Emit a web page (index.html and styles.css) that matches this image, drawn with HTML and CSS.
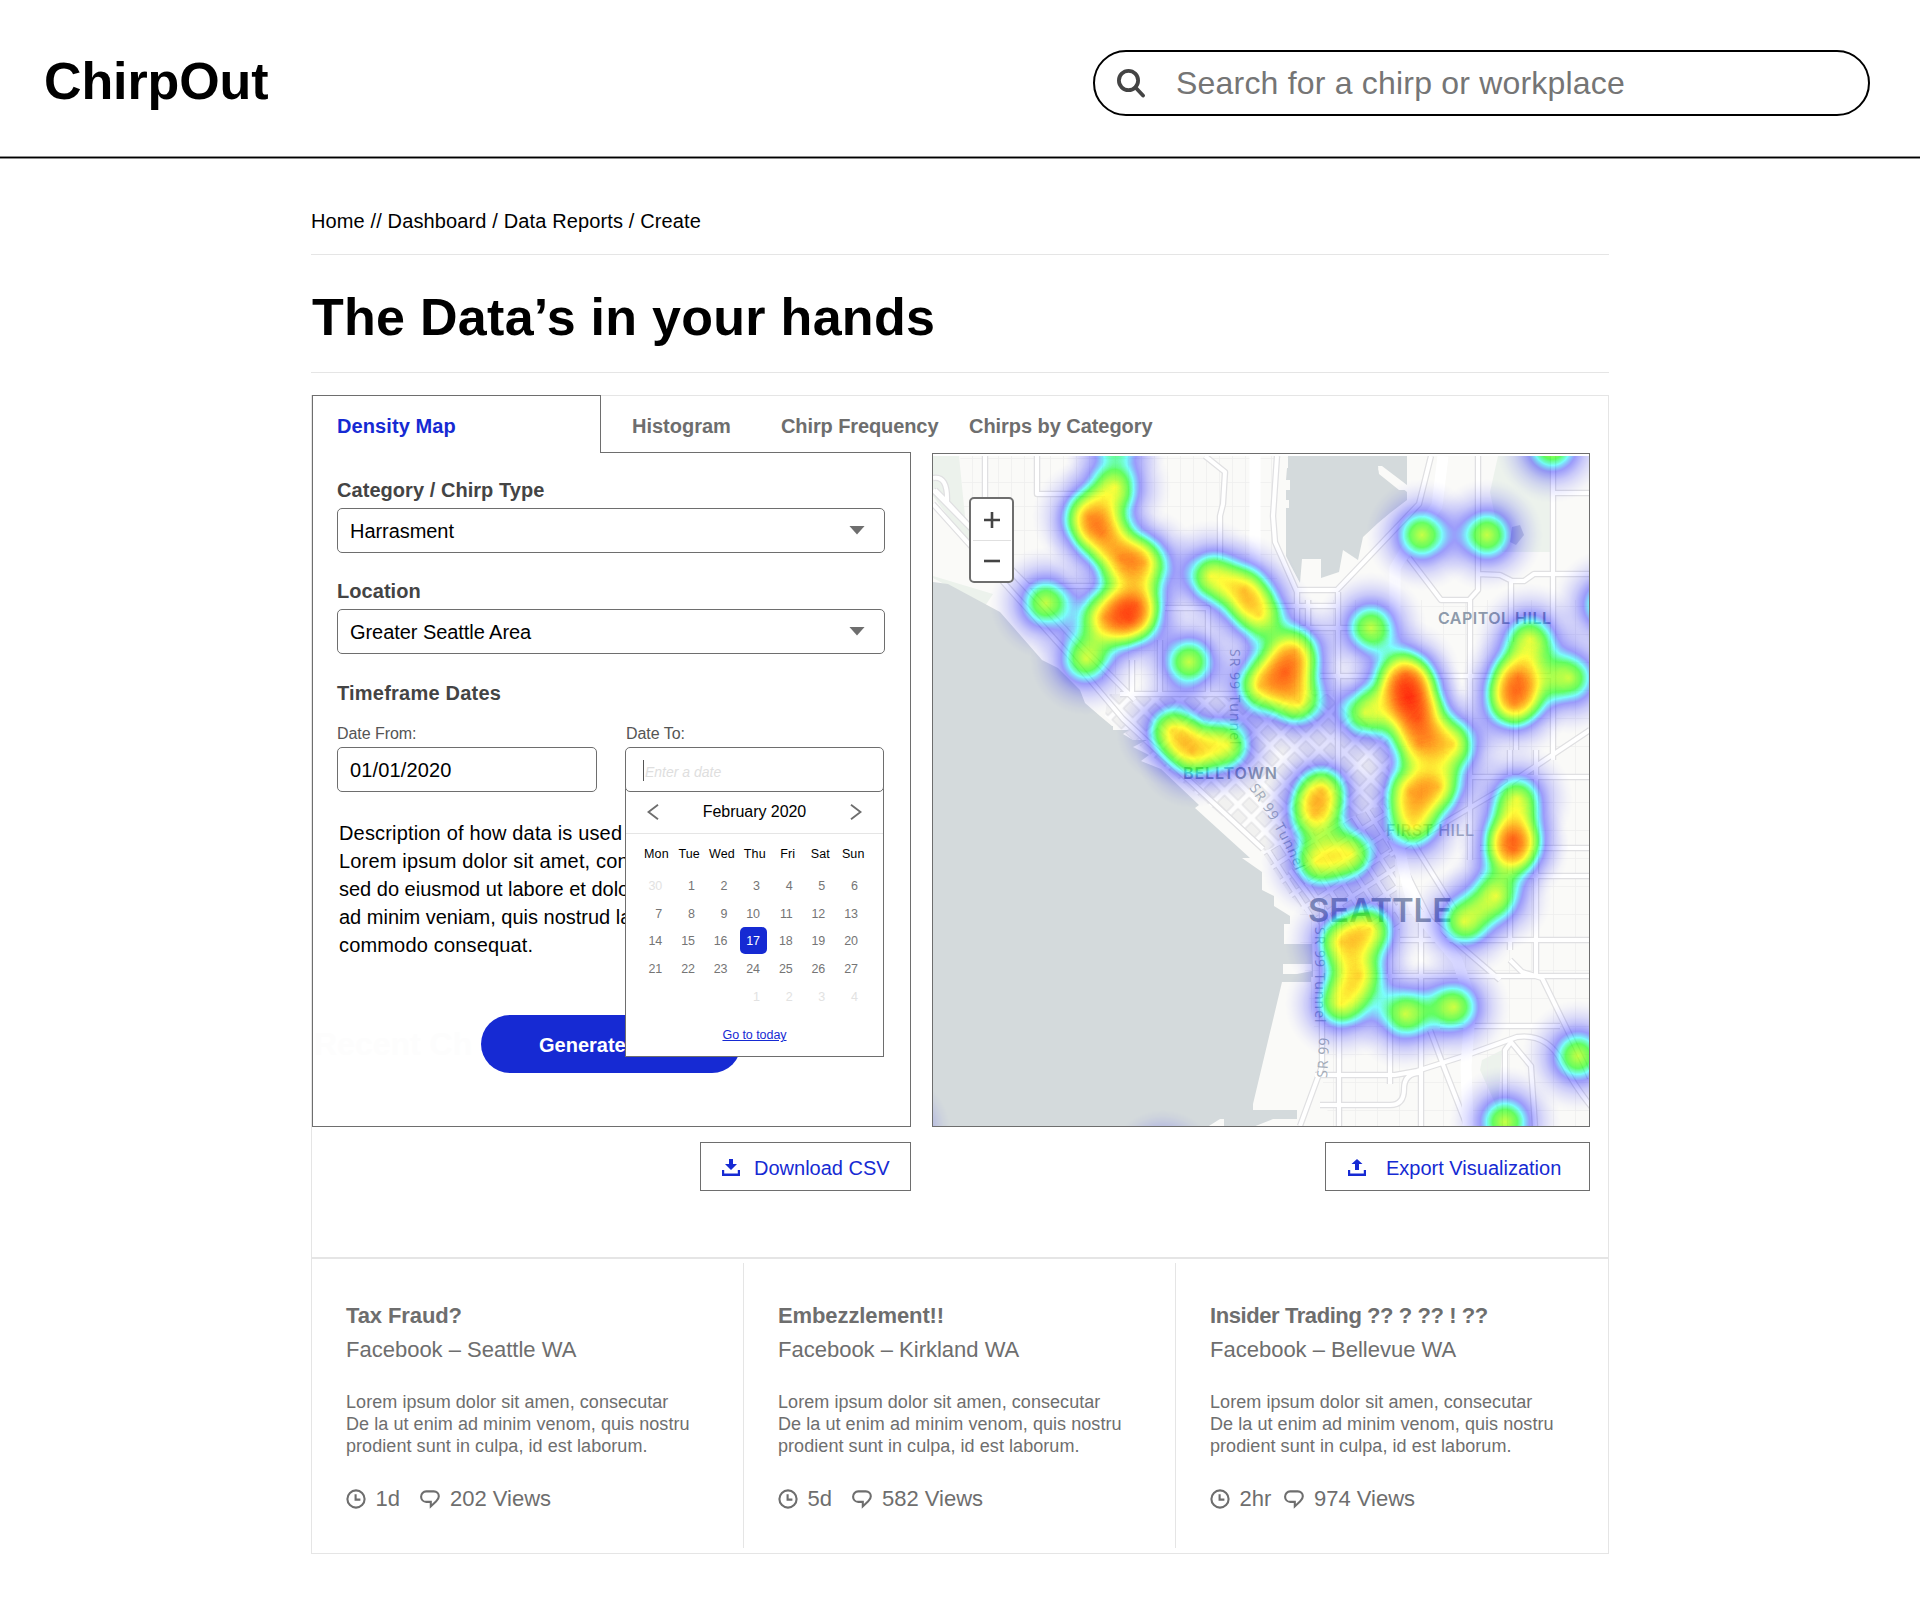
FILE: index.html
```html
<!DOCTYPE html>
<html lang="en">
<head>
<meta charset="utf-8">
<title>ChirpOut – Data Reports</title>
<link rel="stylesheet" href="styles.css">
</head>
<body>
<svg class="sprite" aria-hidden="true">
  <symbol id="i-clock" viewBox="0 0 20 20"><circle cx="10" cy="10" r="8.6"/><path d="M9.6 5.2v5.4h4.8"/></symbol>
  <symbol id="i-bubble" viewBox="0 0 20 20"><path d="M6.2 2.4h7.6c2.9 0 5 2 5 4.8 0 2.2-1 3.6-2.6 5l-5.4 5.2v-4.5H6.2C3.3 12.9 1.1 10.6 1.1 7.7 1.1 4.7 3.3 2.4 6.2 2.4z"/></symbol>
</svg>
<header class="header">
  <div class="logo">ChirpOut</div>
  <div class="search">
    <svg class="search-icon" viewBox="0 0 30 30"><circle cx="12.5" cy="12.5" r="9.6"/><path d="M19.500 19.500l7.500 8"/></svg>
    <span>Search for a chirp or workplace</span>
  </div>
</header>
<main class="main">
  <nav class="crumbs">Home // Dashboard / Data Reports / Create</nav>
  <h1 class="title">The Data’s in your hands</h1>
  <section class="report">
    <div class="tabs">
      <div class="tab tab-active">Density Map</div>
      <div class="tab tab-hist">Histogram</div>
      <div class="tab tab-freq">Chirp Frequency</div>
      <div class="tab tab-cat">Chirps by Category</div>
    </div>
    <div class="columns">
      <div class="col col-form">
        <form class="panel">
          <div class="label">Category / Chirp Type</div>
          <div class="box select"><span>Harrasment</span><i class="caret"></i></div>
          <div class="label label-2">Location</div>
          <div class="box select"><span>Greater Seattle Area</span><i class="caret"></i></div>
          <div class="label label-3">Timeframe Dates</div>
          <div class="dates">
            <div class="field">
              <div class="small-label">Date From:</div>
              <div class="box"><span>01/01/2020</span></div>
            </div>
            <div class="field field-to">
              <div class="small-label">Date To:</div>
              <div class="box box-date"><i class="cursor"></i><span class="placeholder">Enter a date</span></div>
              <div class="calendar">
                <div class="cal-head">
                  <svg class="chev" viewBox="0 0 12 16"><path d="M11 .8L1.500 8l9.500 7.200"/></svg>
                  <span>February 2020</span>
                  <svg class="chev" viewBox="0 0 12 16"><path d="M1 .8L10.500 8 1 15.200"/></svg>
                </div>
                <div class="weekdays"><span>Mon</span><span>Tue</span><span>Wed</span><span>Thu</span><span>Fri</span><span>Sat</span><span>Sun</span></div>
                <div class="days">
                  <span class="off">30</span><span>1</span><span>2</span><span>3</span><span>4</span><span>5</span><span>6</span>
                  <span>7</span><span>8</span><span>9</span><span>10</span><span>11</span><span>12</span><span>13</span>
                  <span>14</span><span>15</span><span>16</span><span class="picked">17</span><span>18</span><span>19</span><span>20</span>
                  <span>21</span><span>22</span><span>23</span><span>24</span><span>25</span><span>26</span><span>27</span>
                  <span></span><span></span><span></span><span class="off">1</span><span class="off">2</span><span class="off">3</span><span class="off">4</span>
                </div>
                <a class="today">Go to today</a>
              </div>
            </div>
          </div>
          <p class="desc">Description of how data is used<br>Lorem ipsum dolor sit amet, con<br><span class="snug">sed do eiusmod ut labore et dolo</span><br><span class="snug">ad minim veniam, quis nostrud la</span><br>commodo consequat.</p>
          <div class="submit">
            <span class="ghost">Recent Ch</span>
            <div class="generate">Generate</div>
          </div>
        </form>
        <a class="action download">
          <svg class="action-icon" viewBox="0 0 18 17"><path d="M7 0h4v5h4l-6 6-6-6h4zM0 11h2.200v3.400h13.600V11H18v6H0z"/></svg>
          <span>Download CSV</span>
        </a>
      </div>
      <div class="col col-map">
        <div class="map">
          <svg class="basemap" viewBox="933 456 656 670">
            <defs>
              <pattern id="grid" width="13" height="24" patternUnits="userSpaceOnUse" patternTransform="translate(1037 458)"><path d="M0 0H13M0 0V24" class="minor"/></pattern>
              <pattern id="grid2" width="22" height="28" patternUnits="userSpaceOnUse" patternTransform="translate(1553 494)"><path d="M0 0H22M0 0V28" class="minor"/></pattern>
              <pattern id="diag" width="19" height="16" patternUnits="userSpaceOnUse" patternTransform="rotate(45 1250 760)"><rect width="19" height="16" fill="#fdfdfd"/><rect x="3" y="3" width="13" height="10" class="block"/></pattern>
              <pattern id="diag2" width="17" height="15" patternUnits="userSpaceOnUse" patternTransform="rotate(57 1340 860)"><rect width="17" height="15" fill="#fdfdfd"/><rect x="2.500" y="2.500" width="12" height="10" class="block"/></pattern>
            </defs>
            <rect x="933" y="456" width="656" height="670" fill="#fafaf8"/>
            <path fill="#ecf2ec" d="M933 456h26l6 60 20 50-52-70zM1498 456h54v96h-50l-12-60z M933 576l60 18-8 12-52-28zM1482 1060l20-10-4 60-18-40z"/>
            <path fill="url(#grid)" d="M960 456H1277V700H1120L965 520z"/>
            <path fill="url(#grid2)" d="M1300 600H1590V1126H1330L1300 940z"/>
            <path fill="url(#diag)" d="M1108 694H1330L1395 745V800L1300 862L1262 850L1105 716z"/>
            <path fill="url(#diag2)" d="M1395 800V870L1400 930H1322L1290 895L1262 852z"/>
            <g class="casing">
              <path id="r1" d="M985 456V510M1037 456V494H1105M1205 456l20 16-2 32-3 12v44M1120 694H1250M1165 608H1208V694M1132 660V694M1160 640v54"/>
              <path id="r2" d="M933 478q15-3 14 24l-12-12M933 490l95 96h95M933 504l135 150 55 65 140 130M945 500l130 140 60 60"/>
              <path id="r3" d="M1277 456l-4 60 2 26 22 50V700M1297 590h40l82-86 12-48M1308 600v90M1338 592V790M1262 606h75M1320 676h232M1300 628h90"/>
              <path id="r4" d="M1409 558l32 42h28l9-10V456M1470 600V860M1553 456V760M1553 493h37M1478 574l22 1 12 6h12l10-7h56M1511 582v60M1590 730l-90 60-110 65M1516 710v40M1470 777h120M1536 750V976M1510 750v200M1480 848h110M1480 876h110"/>
              <path id="r5" d="M1400 940H1590M1340 976H1590M1440 1026h120M1339 910v216M1390 900v184M1421 910v216M1390 840l40 80 70 60M1405 830l50 80M1430 1030l15 40 22 56M1290 870l30 40M1510 960l12 12 20 6 42 86 6 14M1505 1126v-76l6-8 20 24 4 60"/>
              <path id="r6" d="M1315 1075h80l22-4 50-16 50-18q30-4 45 25t38 55M1320 1105h70q14 0 14-16t16-16M1300 1126l22-60V900"/>
            </g>
            <g class="road"><use href="#r1"/><use href="#r2"/><use href="#r3"/><use href="#r4"/><use href="#r5"/><use href="#r6"/></g>
            <path class="highway" d="M1255 456V640M1443 456l-6 50-30 42-12 20V790q0 60 20 120l42 50 14 40-5 66 2 60"/>
            <path fill="#d4dadc" d="M1288 456H1407V490L1384 473 1378 468 1380 474 1402 488 1407 492V500L1390 513 1378 523 1363 537 1358 560 1343 550 1339 572 1321 578V559H1302L1300 583 1291 566 1286 556V480z"/>
            <path fill="#fafaf8" d="M1288 458v10h-8v-10zM1290 480v10h-10v-10zM1289 500v8h-9v-8zM1378 466l4 0 25 19v5h-8l-20-16z"/>
            <path fill="#d4dadc" d="M933 582l15 2 52 28 42 48 16 8 22 22 5 13 15 13 12 10H1113v4h16l-6 4 10 6h14l-14 7 16 8-8 6 20 8 38 36-4 3 55 50h-8l20 14v18l12 6v10l16 10v8h-6v20h28v20h-29v10h28v8H1282l-29 122v6h44v9h-24l-20 8 6 14H1224v-22h-4l-35 22H933z"/>
            <path fill="#d4dadc" d="M1313 935v42h-31l30-6z"/>
            <path fill="#c9d1d8" d="M1512 527l8-2 4 10-8 10-6-3z"/>
            <g class="place">
              <text x="1438" y="624" class="p-mid" textLength="113">CAPITOL HILL</text>
              <text x="1183" y="779" class="p-mid" textLength="94">BELLTOWN</text>
              <text x="1386" y="836" class="p-mid p-thin" textLength="88">FIRST HILL</text>
              <text x="1308" y="922" class="p-big" textLength="144" lengthAdjust="spacingAndGlyphs">SEATTLE</text>
            </g>
            <g class="street">
              <path id="s1" fill="none" d="M1230 649V770"/><text><textPath href="#s1">SR 99 Tunnel</textPath></text>
              <path id="s2" fill="none" d="M1249 788Q1280 830 1300 880"/><text><textPath href="#s2">SR 99 Tunnel</textPath></text>
              <path id="s3" fill="none" d="M1315 927V1040"/><text><textPath href="#s3">SR 99 Tunnel</textPath></text>
              <path id="s4" fill="none" d="M1327 1078L1331 1010"/><text><textPath href="#s4">SR 99</textPath></text>
            </g>
          </svg>
          <canvas class="heat" id="heat" width="656" height="670"></canvas>
          <div class="zoom"><svg viewBox="0 0 16 16"><path d="M0 8H16M8 0V16"/></svg><i></i><svg viewBox="0 0 16 16"><path d="M0 8H16"/></svg></div>
        </div>
        <a class="action export">
          <svg class="action-icon" viewBox="0 0 18 17"><path d="M7 11h4V5h3.500L9 0 3.500 5H7zM0 11h2.200v3.400h13.600V11H18v6H0z"/></svg>
          <span>Export Visualization</span>
        </a>
      </div>
    </div>
    <div class="cards">
      <article class="card">
        <h2>Tax Fraud?</h2>
        <h3>Facebook – Seattle WA</h3>
        <p>Lorem ipsum dolor sit amen, consecutar<br>De la ut enim ad minim venom, quis nostru<br>prodient sunt in culpa, id est laborum.</p>
        <div class="meta"><svg><use href="#i-clock"/></svg><span class="age">1d</span><svg><use href="#i-bubble"/></svg><span>202 Views</span></div>
      </article>
      <article class="card">
        <h2>Embezzlement!!</h2>
        <h3>Facebook – Kirkland WA</h3>
        <p>Lorem ipsum dolor sit amen, consecutar<br>De la ut enim ad minim venom, quis nostru<br>prodient sunt in culpa, id est laborum.</p>
        <div class="meta"><svg><use href="#i-clock"/></svg><span class="age">5d</span><svg><use href="#i-bubble"/></svg><span>582 Views</span></div>
      </article>
      <article class="card">
        <h2 class="tight">Insider Trading ?? ? ?? ! ??</h2>
        <h3>Facebook – Bellevue WA</h3>
        <p>Lorem ipsum dolor sit amen, consecutar<br>De la ut enim ad minim venom, quis nostru<br>prodient sunt in culpa, id est laborum.</p>
        <div class="meta"><svg><use href="#i-clock"/></svg><span class="age">2hr</span><svg><use href="#i-bubble"/></svg><span>974 Views</span></div>
      </article>
    </div>
  </section>
</main>
<script src="heat.js"></script>
</body>
</html>
```
FILE: styles.css
```css
* { box-sizing: border-box; }
body { margin: 0; background: #fff; color: #000; font: 20px "Liberation Sans", Arial, sans-serif; }
h1, h2, h3, p { margin: 0; }
.sprite { position: absolute; width: 0; height: 0; }

.header { display: flex; justify-content: space-between; align-items: flex-start; height: 159px; padding: 50px 50px 0 43px; border-bottom: 1px solid #8c8c8c; box-shadow: inset 0 -1px #000, inset 0 -2px #8c8c8c; }
.logo { font-size: 52px; font-weight: bold; line-height: 62px; letter-spacing: -.1px; padding-left: 1px; }
.search { display: flex; align-items: center; width: 777px; height: 66px; padding-left: 21px; border: 2px solid #000; border-radius: 33px; font-size: 32px; letter-spacing: .2px; color: #757575; }
.search-icon { width: 30px; height: 30px; margin: 0 30px 0 0; fill: none; stroke: #444; stroke-width: 3.8; stroke-linecap: round; }

.main { width: 1298px; margin: 50px 0 0 311px; }
.crumbs { line-height: 24px; letter-spacing: .13px; padding-bottom: 21px; border-bottom: 1px solid #e5e5e5; }
.title { font-size: 52px; line-height: 60px; letter-spacing: .28px; padding: 32px 0 25px 1px; border-bottom: 1px solid #e5e5e5; }

.report { margin-top: 22px; border: 1px solid #e5e5e5; }
.tabs { position: relative; z-index: 1; display: flex; height: 57px; margin-top: -1px; font-weight: bold; line-height: 24px; color: #6e6e6e; }
.tab { padding-top: 19px; }
.tab-active { width: 289px; height: 58px; margin-right: 31px; padding: 18px 0 0 24px; border: 1px solid #6e6e6e; border-bottom: 0; background: #fff; color: #162ad3; letter-spacing: .1px; }
.tab-hist { width: 149px; }
.tab-freq { width: 188px; letter-spacing: -.1px; }
.tab-cat { letter-spacing: -.05px; }

.columns { display: flex; gap: 21px; margin-bottom: 66px; }
.col { display: flex; flex-direction: column; align-items: flex-end; gap: 15px; }
.col-form { width: 599px; }
.col-map { width: 658px; }
.panel { width: 599px; height: 675px; padding: 25px 25px 0 24px; border: 1px solid #6e6e6e; }
.label { font-weight: bold; line-height: 24px; margin-bottom: 6px; color: #444; letter-spacing: .05px; }
.label-2 { margin-top: 26px; }
.label-3 { margin: 27px 0 19px; letter-spacing: .22px; }
.box { display: flex; align-items: center; height: 45px; padding: 2px 19px 0 12px; border: 1px solid #6e6e6e; border-radius: 5px; background: #fff; }
.select { justify-content: space-between; letter-spacing: -.06px; }
.caret { width: 16px; height: 9px; margin-top: -3px; background: #6e6e6e; clip-path: polygon(0 0, 100% 0, 50% 100%); }
.dates { display: grid; grid-template-columns: 260px 259px; gap: 28px; letter-spacing: .15px; }
.field { position: relative; }
.small-label { font-size: 16px; line-height: 20px; margin-bottom: 3px; color: #555; letter-spacing: -.05px; }
.field-to .small-label { padding-left: 1px; }
.box-date { position: relative; z-index: 2; padding: 0 0 0 17px; }
.cursor { width: 1px; height: 21px; margin-top: 2px; background: #555; }
.placeholder { margin: 5px 0 0 1px; font-size: 14px; font-style: italic; letter-spacing: 0; color: #dedede; }

.calendar { position: absolute; z-index: 1; top: 56px; left: 0; width: 259px; height: 277px; border: 1px solid #6e6e6e; background: #fff; font-size: 12.5px; }
.cal-head { display: flex; justify-content: space-between; height: 53px; padding: 21px 21px 0; border-bottom: 1px solid #e5e5e5; font-size: 16px; line-height: 20px; letter-spacing: -.05px; }
.chev { width: 12px; height: 16px; margin-top: 2px; fill: none; stroke: #6e6e6e; stroke-width: 1.9; }
.weekdays { display: grid; grid-template-columns: repeat(7, 32.8px); padding: 12px 0 0 14px; line-height: 16px; text-align: center; letter-spacing: .1px; }
.days { display: grid; grid-template-columns: repeat(7, 32.6px); grid-auto-rows: 27.7px; padding: 11px 0 0 3.5px; line-height: 27.7px; text-align: right; color: #757575; letter-spacing: -.2px; }
.days .off { color: #e2e2e2; }
.days .picked { position: relative; z-index: 0; color: #fff; }
.picked::before { content: ""; position: absolute; z-index: -1; top: -1px; right: -7px; width: 27px; height: 27px; border-radius: 5px; background: #162ad3; }
.today { display: block; padding-top: 16px; line-height: 16px; text-align: center; text-decoration: underline; color: #162ad3; letter-spacing: -.05px; }

.desc { margin: 27px 0 56px 2px; line-height: 28px; letter-spacing: .17px; white-space: nowrap; }
.desc .snug { letter-spacing: 0; }
.submit { position: relative; }
.ghost { position: absolute; left: -23px; top: 0; font-size: 32px; font-weight: bold; line-height: 58px; color: #fdfdfd; }
.generate { position: relative; width: 260px; height: 58px; margin-left: 144px; padding: 1px 0 0 58px; border-radius: 29px; background: #162ad3; color: #fff; font-weight: bold; line-height: 58px; }

.map { position: relative; width: 658px; height: 674px; margin-top: 1px; padding-top: 2px; border: 1px solid #6e6e6e; }
.basemap { display: block; width: 656px; height: 670px; }
.heat { position: absolute; left: 0; top: 2px; }
.minor { fill: none; stroke: #eee; stroke-width: 1.5; }
.block { fill: #f1f1f0; stroke: #dedee0; stroke-width: 1; }
.casing { fill: none; stroke: #e0e0e2; stroke-width: 6.5; stroke-linejoin: round; }
.road { fill: none; stroke: #fff; stroke-width: 4; stroke-linejoin: round; }
.highway { fill: none; stroke: #fff; stroke-width: 11; stroke-linejoin: round; }
.place { font-family: Inter, sans-serif; font-weight: 600; fill: #8e9aab; }
.p-mid { font-size: 16px; }
.p-thin { font-weight: 500; fill: #a8b0bc; }
.p-big { font-size: 32px; }
.street { font: 14px "Open Sans", sans-serif; fill: #a3acb8; letter-spacing: 1px; }
.zoom { position: absolute; left: 36px; top: 43px; display: flex; flex-direction: column; align-items: center; justify-content: space-between; width: 45px; height: 86px; padding: 13px 0 12px; border: 2px solid #6e6e6e; border-radius: 5px; background: #fff; }
.zoom svg { width: 16px; height: 16px; fill: none; stroke: #444; stroke-width: 2.6; }
.zoom i { width: 38px; height: 1px; background: #e0e0e0; }

.action { display: flex; align-items: center; height: 49px; border: 1px solid #6e6e6e; color: #162ad3; }
.action span { padding-top: 3px; }
.action-icon { width: 18px; height: 17px; margin-top: 1px; fill: #162ad3; }
.download { width: 211px; padding-left: 21px; }
.download .action-icon { margin-right: 14px; }
.export { width: 265px; padding-left: 22px; }
.export .action-icon { margin-right: 20px; }

.cards { display: grid; grid-template-columns: repeat(3, 432px); padding: 4px 0 5px; border-top: 2px solid #e5e5e5; color: #6e6e6e; }
.card { height: 285px; padding: 39px 0 0 34px; border-right: 1px solid #e5e5e5; }
.card:last-child { border-right: 0; }
.card h2 { font-size: 22px; line-height: 28px; margin-bottom: 6px; letter-spacing: -.1px; }
.card .tight { letter-spacing: -.42px; }
.card h3 { font-size: 22px; line-height: 28px; font-weight: normal; margin-bottom: 27px; }
.card p { font-size: 18px; line-height: 22px; margin-bottom: 28px; letter-spacing: .06px; white-space: nowrap; }
.meta { display: flex; align-items: center; font-size: 22px; line-height: 28px; }
.meta svg { width: 20px; height: 20px; margin-left: -.5px; fill: none; stroke: #6e6e6e; stroke-width: 2.1; }
.age { width: 45px; margin-left: 10px; }
.meta svg + span:last-child { margin-left: 10px; }
```
FILE: heat.js
```javascript
// Report locations on the map: x, y, optional weight.
const points = [
  [1116, 434], [1115, 487], [1088, 516], [1101, 533], [1121, 559], [1144, 563],
  [1136, 605], [1130, 620], [1105, 617], [1086, 659], [1046, 603], [1189, 662],
  [1211, 576], [1244, 590], [1259, 615], [1295, 651], [1260, 686], [1285, 672], [1299, 702],
  [1371, 628], [1422, 535], [1487, 535], [1552, 447], [1608, 605],
  [1405, 675], [1409, 697], [1406, 687, .4], [1365, 713], [1418, 718], [1419, 744], [1453, 744],
  [1410, 792], [1438, 787], [1413, 825],
  [1530, 639], [1518, 677], [1514, 704], [1516, 691, .4], [1569, 678],
  [1172, 730], [1192, 752], [1227, 745], [1322, 790], [1314, 814],
  [1317, 862], [1351, 854], [1517, 799], [1513, 838], [1513, 850], [1496, 896], [1464, 922],
  [1341, 942], [1370, 929], [1359, 976], [1341, 1004],
  [1405, 1014], [1454, 1007], [1578, 1056], [1505, 1122], [894, 1130], [1163, 1166]
];
const R = 56;
const canvas = document.getElementById('heat');
const ctx = canvas.getContext('2d');
const falloff = [[0, 1], [.08, .96], [.2, .87], [.3, .75], [.4, .6], [.5, .43], [.6, .28], [.7, .17], [.8, .09], [.9, .03], [1, 0]];
for (const [px, py, w = .72] of points) {
  const x = px - 933, y = py - 456;
  const g = ctx.createRadialGradient(x, y, 0, x, y, R);
  for (const [s, a] of falloff) g.addColorStop(s, `rgba(0,0,0,${a * w})`);
  ctx.fillStyle = g;
  ctx.fillRect(x - R, y - R, R * 2, R * 2);
}
// Map density to the blue–cyan–lime–yellow–red ramp.
const strip = document.createElement('canvas');
strip.width = 256; strip.height = 1;
const sc = strip.getContext('2d');
const ramp = sc.createLinearGradient(0, 0, 256, 0);
[[.38, 'blue'], [.51, 'cyan'], [.61, 'lime'], [.77, 'yellow'], [.97, 'red']].forEach(([s, c]) => ramp.addColorStop(s, c));
sc.fillStyle = ramp;
sc.fillRect(0, 0, 256, 1);
const colors = sc.getImageData(0, 0, 256, 1).data;
const img = ctx.getImageData(0, 0, canvas.width, canvas.height);
for (let i = 0; i < img.data.length; i += 4) {
  const a = img.data[i + 3] * 4;
  img.data[i] = colors[a];
  img.data[i + 1] = colors[a + 1];
  img.data[i + 2] = colors[a + 2];
}
ctx.putImageData(img, 0, 0);
```
